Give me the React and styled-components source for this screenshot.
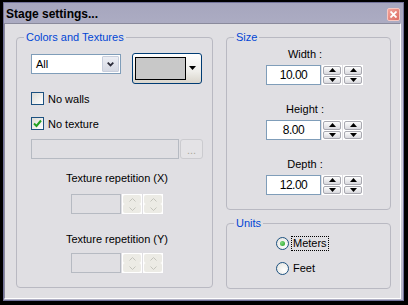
import styled, { createGlobalStyle } from 'styled-components';

const GlobalStyle = createGlobalStyle`
  html, body { margin: 0; padding: 0; background: #000; }
  body {
    font-family: "Liberation Sans", Arial, sans-serif;
    font-size: 11px;
    color: #000;
  }
  * { box-sizing: border-box; }
`;

const Window = styled.div`
  margin: 2px 0 0 3px;
  width: 401px;
  height: 299px;
  border: 1px solid #72729a;
  display: flex;
  flex-direction: column;
  background: linear-gradient(#a6a6be, #c4c4d6 35%, #d2d2de 65%, #b2b2c6);
`;

const TitleBar = styled.div`
  height: 20px;
  flex: none;
  display: flex;
  align-items: center;
  justify-content: space-between;
  padding: 2px 3px 0 2px;
`;

const Title = styled.span`
  font-weight: bold;
  font-size: 12px;
`;

const CloseButton = styled.div`
  width: 13px;
  height: 13px;
  border: 1px solid #f6c8c2;
  border-radius: 2px;
  background: linear-gradient(135deg, #f3a49b, #dc6c63);
  display: flex;
  align-items: center;
  justify-content: center;
`;

const Client = styled.div`
  flex: 1;
  margin: 0 2px 1px 0;
  background: #e0dfe3;
  border-top: 1px solid #8a8a9c;
  border-left: 1px solid #8a8a9c;
  border-right: 1px solid #fff;
  border-bottom: 1px solid #fff;
  display: flex;
  gap: 13px;
  padding: 7px 0 0 11px;
`;

const Column = styled.div`
  display: flex;
  flex-direction: column;
  gap: 7px;
`;

const Group = styled.fieldset`
  margin: 0;
  padding: 0;
  width: ${p => p.$w}px;
  height: ${p => p.$h}px;
  min-inline-size: 0;
  border: 1px solid #b9b9c2;
  border-radius: 4px;
`;

const Legend = styled.legend`
  margin-left: 7px;
  padding: 0 2px;
  color: #0046d5;
  font-size: 11px;
  line-height: 13px;
`;

const Body = styled.div`
  display: flex;
  flex-direction: column;
  padding: ${p => p.$pad};
  gap: ${p => p.$gap || 0}px;
`;

const Row = styled.div`
  display: flex;
  align-items: ${p => p.$align || 'center'};
  margin-top: ${p => p.$mt || 0}px;
  margin-left: ${p => p.$ml || 0}px;
`;

const SpinGroup = styled.div`
  display: flex;
  gap: 1px;
`;

const Spinners = styled.div`
  display: flex;
  gap: 1px;
`;

/* combo box */
const Combo = styled.div`
  width: 90px;
  height: 20px;
  margin-top: 1px;
  display: flex;
  align-items: center;
  background: #fff;
  border: 1px solid #7f9db9;
  padding: 1px;
`;

const ComboText = styled.span`
  flex: 1;
  padding-left: 3px;
`;

const ComboButton = styled.span`
  width: 17px;
  height: 16px;
  display: flex;
  align-items: center;
  justify-content: center;
  background: linear-gradient(#eceef4, #d6d9e3);
  border: 1px solid #c8cedc;
  border-radius: 1px;
`;

/* color picker button */
const ColorButton = styled.div`
  width: 70px;
  height: 31px;
  margin-left: 11px;
  border: 1px solid #003c74;
  border-radius: 3px;
  background: linear-gradient(#fefefe, #efeeea 60%, #d9d5cc);
  display: flex;
  align-items: center;
  padding-left: 2px;
`;

const Swatch = styled.span`
  width: 51px;
  height: 23px;
  background: #c8c8c8;
  border: 1px solid #000;
`;

const DropArrow = styled.svg`
  margin: -2px 0 0 3px;
`;

/* checkbox */
const Check = styled.label`
  display: flex;
  align-items: center;
  gap: 4px;
  margin-top: ${p => p.$mt}px;
  height: 13px;
`;

const CheckBox = styled.span`
  width: 13px;
  height: 13px;
  border: 1px solid #1c5180;
  background: linear-gradient(135deg, #dcdcd7, #fff);
  display: flex;
  align-items: center;
  justify-content: center;
`;

/* text fields */
const TextField = styled.div`
  width: ${p => p.$w}px;
  height: 20px;
  border: 1px solid ${p => (p.$disabled ? '#b6bac2' : '#7f9db9')};
  background: ${p => (p.$disabled ? '#e0dfe3' : '#fff')};
  font-size: 12px;
  letter-spacing: -0.5px;
  display: flex;
  align-items: center;
  justify-content: center;
`;

const BrowseButton = styled.div`
  width: 23px;
  height: 20px;
  margin-left: 1px;
  border: 1px solid #cbcbcf;
  border-radius: 3px;
  background: #e4e3e6;
  color: #aca899;
  display: flex;
  align-items: flex-end;
  justify-content: center;
  padding-bottom: 4px;
  line-height: 8px;
`;

const Caption = styled.div`
  width: ${p => p.$w}px;
  margin-top: ${p => p.$mt || 0}px;
  text-align: center;
  line-height: 13px;
`;

/* spinners */
const SpinCol = styled.div`
  width: 20px;
  height: 20px;
  display: flex;
  flex-direction: column;
  background: #fff;
  padding: 1px;
  gap: ${p => (p.$disabled ? 0 : 1)}px;
`;

const SpinBtn = styled.div`
  flex: 1;
  display: flex;
  align-items: center;
  justify-content: center;
  border-radius: 2px;
  ${p =>
    p.$disabled
      ? 'background: #ecebe5;'
      : 'background: linear-gradient(#fdfdfd, #d9d9de); border: 1px solid #a8a8b0;'}
`;

/* fields in Size group */
const SizeField = styled.div`
  display: flex;
  flex-direction: column;
`;

/* radio */
const Radio = styled.label`
  display: flex;
  align-items: center;
  gap: 2px;
  height: 15px;
`;

const RadioCircle = styled.span`
  width: 13px;
  height: 13px;
  border-radius: 50%;
  border: 1px solid #1c5180;
  background: radial-gradient(circle at 65% 65%, #fff, #e2e2dc);
  display: flex;
  align-items: center;
  justify-content: center;
`;

const RadioDot = styled.span`
  width: 5px;
  height: 5px;
  border-radius: 50%;
  background: radial-gradient(circle at 35% 35%, #7ed97e, #21a121);
`;

const RadioText = styled.span`
  border: 1px dotted ${p => (p.$focus ? '#000' : 'transparent')};
  padding: 0 1px;
  line-height: 13px;
`;

function Arrow({ up, color = '#000', thin }) {
  if (thin) {
    return (
      <svg width="7" height="4" viewBox="0 0 7 4">
        <polyline
          points={up ? '0.5,3.5 3.5,0.5 6.5,3.5' : '0.5,0.5 3.5,3.5 6.5,0.5'}
          fill="none"
          stroke={color}
          strokeWidth="1"
        />
      </svg>
    );
  }
  return (
    <svg width="7" height="4" viewBox="0 0 7 4">
      <polygon points={up ? '0,4 3.5,0 7,4' : '0,0 7,0 3.5,4'} fill={color} />
    </svg>
  );
}

function Spinner({ disabled }) {
  const color = disabled ? '#c4c4bc' : '#000';
  return (
    <SpinCol $disabled={disabled}>
      <SpinBtn $disabled={disabled}>
        <Arrow up color={color} thin={disabled} />
      </SpinBtn>
      <SpinBtn $disabled={disabled}>
        <Arrow color={color} thin={disabled} />
      </SpinBtn>
    </SpinCol>
  );
}

function SpinField({ value, width, disabled }) {
  return (
    <SpinGroup>
      <TextField $w={width} $disabled={disabled}>
        {value}
      </TextField>
      <Spinners>
        <Spinner disabled={disabled} />
        <Spinner disabled={disabled} />
      </Spinners>
    </SpinGroup>
  );
}

const sizes = [
  ['Width :', '10.00'],
  ['Height :', '8.00'],
  ['Depth :', '12.00'],
];

export default function App() {
  return (
    <>
      <GlobalStyle />
      <Window>
        <TitleBar>
          <Title>Stage settings...</Title>
          <CloseButton>
            <svg width="7" height="7" viewBox="0 0 7 7">
              <path d="M0.5 0.5 L6.5 6.5 M6.5 0.5 L0.5 6.5" stroke="#fff" strokeWidth="1.8" />
            </svg>
          </CloseButton>
        </TitleBar>
        <Client>
          <Group $w={197} $h={257}>
            <Legend>Colors and Textures</Legend>
            <Body $pad="9px 9px 0 14px">
              <Row $align="flex-start">
                <Combo>
                  <ComboText>All</ComboText>
                  <ComboButton>
                    <svg width="7" height="5" viewBox="0 0 7 5">
                      <polyline points="0.7,0.7 3.5,3.5 6.3,0.7" fill="none" stroke="#2c2c3a" strokeWidth="1.8" />
                    </svg>
                  </ComboButton>
                </Combo>
                <ColorButton>
                  <Swatch />
                  <DropArrow width="7" height="4" viewBox="0 0 7 4">
                    <polygon points="0,0 7,0 3.5,4" fill="#000" />
                  </DropArrow>
                </ColorButton>
              </Row>
              <Check $mt={8}>
                <CheckBox />
                No walls
              </Check>
              <Check $mt={12}>
                <CheckBox>
                  <svg width="9" height="9" viewBox="0 0 9 9">
                    <polyline points="1,4.5 3.5,7 8,1.5" fill="none" stroke="#21a121" strokeWidth="2" />
                  </svg>
                </CheckBox>
                No texture
              </Check>
              <Row $mt={9}>
                <TextField $w={148} $disabled />
                <BrowseButton>...</BrowseButton>
              </Row>
              <Caption $w={172} $mt={13}>Texture repetition (X)</Caption>
              <Row $mt={9} $ml={40}>
                <SpinField width={50} disabled />
              </Row>
              <Caption $w={172} $mt={19}>Texture repetition (Y)</Caption>
              <Row $mt={7} $ml={40}>
                <SpinField width={50} disabled />
              </Row>
            </Body>
          </Group>
          <Column>
            <Group $w={165} $h={179}>
              <Legend>Size</Legend>
              <Body $pad="4px 0 0 0" $gap={18}>
                {sizes.map(([label, value]) => (
                  <SizeField key={label}>
                    <Caption $w={156}>{label}</Caption>
                    <Row $mt={4} $ml={39}>
                      <SpinField width={55} value={value} />
                    </Row>
                  </SizeField>
                ))}
              </Body>
            </Group>
            <Group $w={165} $h={72}>
              <Legend>Units</Legend>
              <Body $pad="6px 0 0 49px" $gap={10}>
                <Radio>
                  <RadioCircle>
                    <RadioDot />
                  </RadioCircle>
                  <RadioText $focus>Meters</RadioText>
                </Radio>
                <Radio>
                  <RadioCircle />
                  <RadioText>Feet</RadioText>
                </Radio>
              </Body>
            </Group>
          </Column>
        </Client>
      </Window>
    </>
  );
}
